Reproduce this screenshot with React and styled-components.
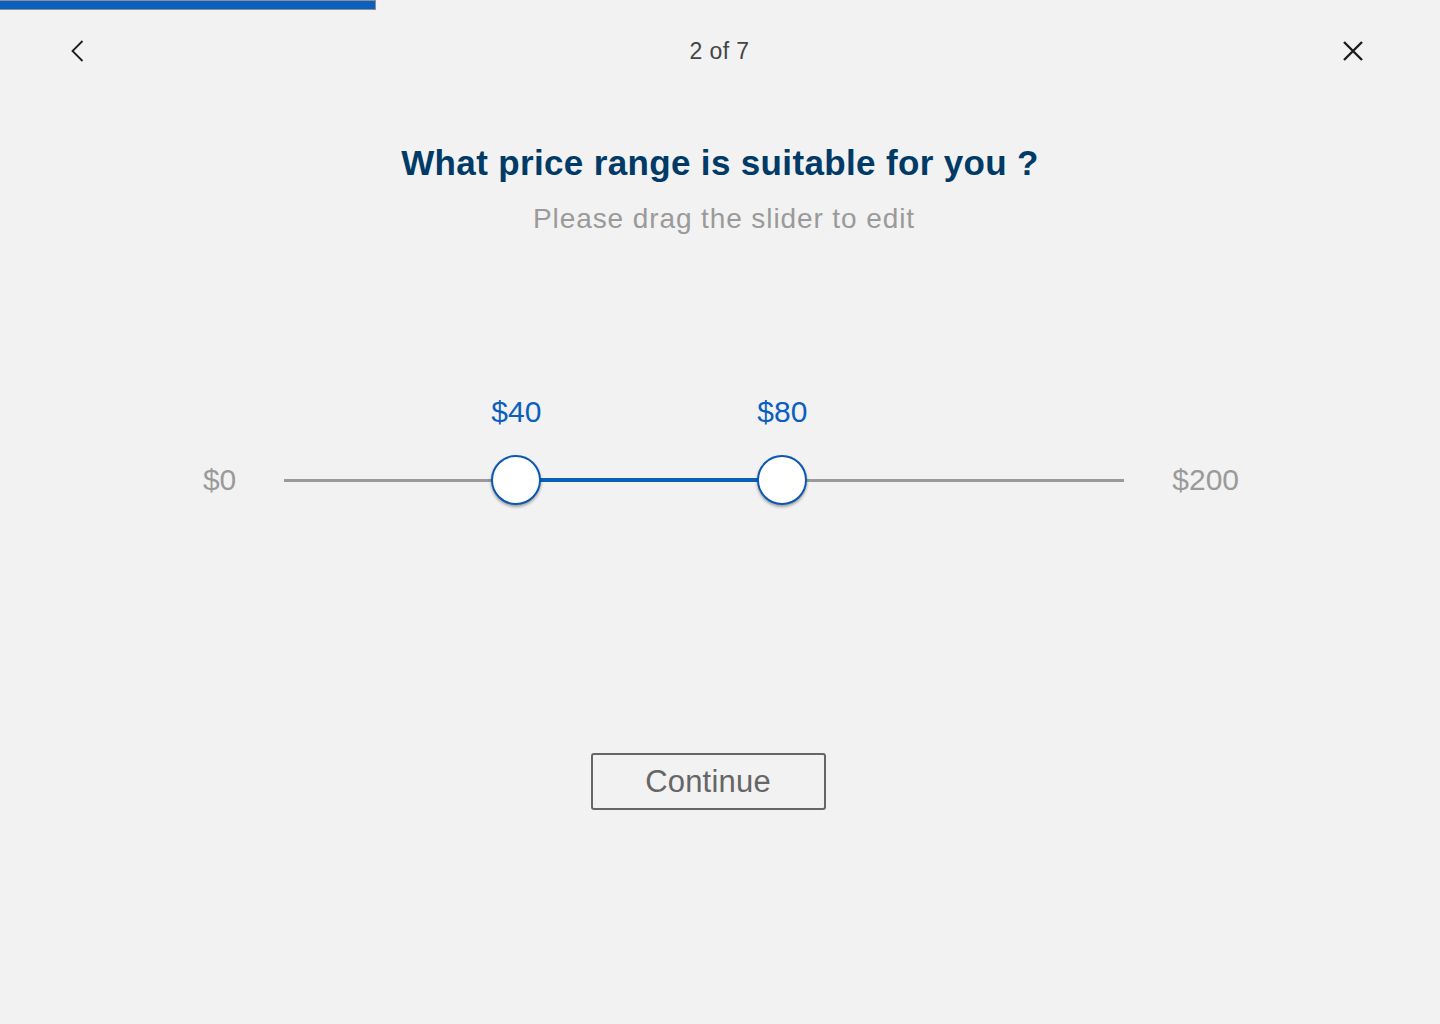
import React from "react";
import styled, { createGlobalStyle } from "styled-components";

const GlobalStyle = createGlobalStyle`
  html, body {
    margin: 0;
    padding: 0;
    background: #f2f2f2;
  }
  body {
    font-family: "Liberation Sans", Arial, Helvetica, sans-serif;
  }
`;

const Page = styled.div`
  width: 1440px;
  min-height: 1024px;
  background: #f2f2f2;
  display: flex;
  flex-direction: column;
`;

const ProgressTrack = styled.div`
  height: 10px;
  width: 100%;
`;

const ProgressFill = styled.div`
  height: 100%;
  background: #0b5fbf;
  box-sizing: border-box;
  border: 1px solid #8f8f8f;
  border-left: none;
`;

const Header = styled.header`
  height: 82px;
  display: flex;
  align-items: center;
  justify-content: space-between;
  padding: 0 74px 0 64px;
`;

const IconButton = styled.button`
  width: 26px;
  height: 26px;
  padding: 0;
  border: none;
  background: transparent;
  display: flex;
  align-items: center;
  justify-content: center;
  cursor: pointer;
`;

const StepLabel = styled.div`
  font-size: 23px;
  color: #444;
  letter-spacing: 0.4px;
  margin-left: 9px;
`;

const Title = styled.h1`
  margin: 51px 0 0;
  font-size: 35px;
  line-height: 40px;
  font-weight: 700;
  color: #003a66;
  text-align: center;
  letter-spacing: 0.35px;
`;

const Subtitle = styled.p`
  margin: 20px 0 0;
  font-size: 28px;
  line-height: 32px;
  color: #9a9a9a;
  text-align: center;
  letter-spacing: 0.9px;
  padding-left: 8px;
`;

const SliderRow = styled.div`
  margin-top: 215px;
  height: 60px;
  display: flex;
  align-items: center;
  justify-content: center;
  gap: 48px;
  padding-left: 2px;
`;

const EndLabel = styled.span`
  font-size: 30px;
  color: #9a9a9a;
`;

const Track = styled.div`
  position: relative;
  width: 840px;
  height: 3px;
  background: #9a9a9a;
`;

const ActiveRange = styled.div`
  position: absolute;
  top: -0.5px;
  height: 4px;
  background: #0b5fbf;
`;

const Thumb = styled.div`
  position: absolute;
  top: 50%;
  width: 46px;
  height: 46px;
  margin-left: -25px;
  margin-top: -25px;
  border-radius: 50%;
  background: #fff;
  border: 2px solid #0a58b3;
  box-shadow: 0 2px 3px rgba(0, 0, 0, 0.35);
`;

const ThumbValue = styled.span`
  position: absolute;
  top: -61px;
  left: 50%;
  transform: translateX(-50%);
  font-size: 30px;
  line-height: 32px;
  color: #0b5fbf;
  white-space: nowrap;
`;

const ButtonRow = styled.div`
  margin-top: 243px;
  display: flex;
  justify-content: center;
  padding-right: 24px;
`;

const ContinueButton = styled.button`
  width: 235px;
  height: 57px;
  box-sizing: border-box;
  border: 2px solid #666;
  border-radius: 3px;
  background: transparent;
  font-family: "Liberation Sans", Arial, Helvetica, sans-serif;
  font-size: 31px;
  letter-spacing: 0.2px;
  color: #666;
  cursor: pointer;
`;

const MIN_POS = 232 / 840;
const MAX_POS = 498 / 840;

export default function App() {
  const lo = MIN_POS * 100;
  const hi = MAX_POS * 100;
  return (
    <>
      <GlobalStyle />
      <Page>
        <ProgressTrack>
          <ProgressFill style={{ width: `${(376 / 1440) * 100}%` }} />
        </ProgressTrack>
        <Header>
          <IconButton aria-label="Back">
            <svg width="14" height="22" viewBox="0 0 14 22">
              <path d="M12.5 1 L2.5 11 L12.5 21" fill="none" stroke="#1c1c1c" strokeWidth="1.8" />
            </svg>
          </IconButton>
          <StepLabel>2 of 7</StepLabel>
          <IconButton aria-label="Close">
            <svg width="22" height="22" viewBox="0 0 22 22">
              <path d="M2 2 L20 20 M20 2 L2 20" fill="none" stroke="#1c1c1c" strokeWidth="2.4" />
            </svg>
          </IconButton>
        </Header>
        <Title>What price range is suitable for you ?</Title>
        <Subtitle>Please drag the slider to edit</Subtitle>
        <SliderRow>
          <EndLabel>$0</EndLabel>
          <Track>
            <ActiveRange style={{ left: `${lo}%`, width: `${hi - lo}%` }} />
            <Thumb style={{ left: `${lo}%` }}>
              <ThumbValue>$40</ThumbValue>
            </Thumb>
            <Thumb style={{ left: `${hi}%` }}>
              <ThumbValue>$80</ThumbValue>
            </Thumb>
          </Track>
          <EndLabel>$200</EndLabel>
        </SliderRow>
        <ButtonRow>
          <ContinueButton>Continue</ContinueButton>
        </ButtonRow>
      </Page>
    </>
  );
}
